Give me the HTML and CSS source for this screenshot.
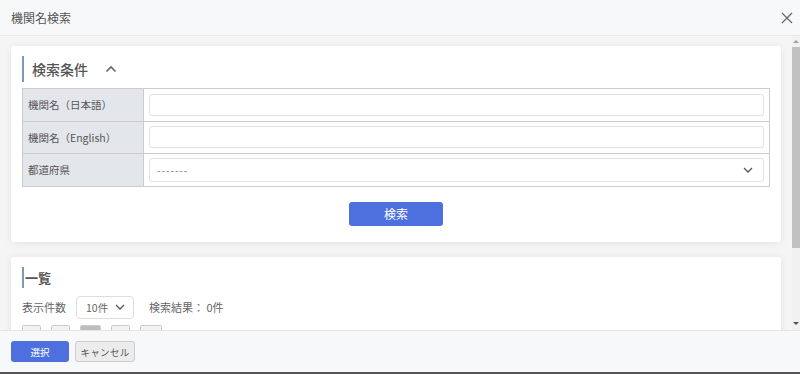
FILE: index.html
```html
<!DOCTYPE html>
<html lang="ja">
<head>
  <meta charset="UTF-8" />
  <meta name="viewport" content="width=device-width, initial-scale=1.0" />
  <title>機関名検索</title>
  <link rel="stylesheet" href="styles.css">
</head>
<body>
  <div class="modal">
    <div class="modal-header">
      <span class="modal-title">機関名検索</span>
      <button class="close" aria-label="close">
        <svg width="12" height="12" viewBox="0 0 12 12"><path d="M1 1L11 11M11 1L1 11" stroke="#666" stroke-width="1.2" fill="none"/></svg>
      </button>
    </div>

    <div class="modal-body">
      <div class="content">
        <div class="card">
          <div class="section-title">
            検索条件
            <svg class="toggle" width="12" height="8" viewBox="0 0 12 8"><path d="M1.5 6.5L6 2L10.5 6.5" stroke="#666" stroke-width="1.6" fill="none"/></svg>
          </div>
          <table class="form-table">
            <tr>
              <th>機関名（日本語）</th>
              <td><input type="text" class="input"></td>
            </tr>
            <tr>
              <th>機関名（English）</th>
              <td><input type="text" class="input"></td>
            </tr>
            <tr>
              <th>都道府県</th>
              <td>
                <div class="input select">
                  <span class="placeholder">-------</span>
                  <svg width="10" height="6" viewBox="0 0 10 6"><path d="M1 1L5 5L9 1" stroke="#555" stroke-width="1.3" fill="none"/></svg>
                </div>
              </td>
            </tr>
          </table>
          <div class="actions">
            <button class="btn-primary btn-search">検索</button>
          </div>
        </div>

        <div class="card">
          <div class="section-title small">一覧</div>
          <div class="list-tools">
            <span>表示件数</span>
            <div class="per-page">
              <span>10件</span>
              <svg width="10" height="6" viewBox="0 0 10 6"><path d="M1 1L5 5L9 1" stroke="#555" stroke-width="1.3" fill="none"/></svg>
            </div>
            <span class="result">検索結果： 0件</span>
          </div>
          <div class="pager">
            <span class="page">«</span>
            <span class="page">‹</span>
            <span class="page active">1</span>
            <span class="page">›</span>
            <span class="page wide">»</span>
          </div>
        </div>
      </div>

      <div class="scrollbar">
        <span class="arrow up"></span>
        <div class="track"><div class="thumb"></div></div>
        <span class="arrow down"></span>
      </div>
    </div>

    <div class="modal-footer">
      <button class="btn-primary btn-select">選択</button>
      <button class="btn-cancel">キャンセル</button>
    </div>
  </div>
</body>
</html>
```

FILE: styles.css
```css
* {
  box-sizing: border-box;
}
html, body {
  margin: 0;
  height: 100%;
}
body {
  font-family: 'Noto Sans CJK JP', 'Noto Sans', sans-serif;
  color: #555;
  background: #555;
  overflow: hidden;
}
.modal {
  height: 372px;
  display: flex;
  flex-direction: column;
  background: #f5f5f5;
}
.modal-header {
  height: 36px;
  flex: none;
  display: flex;
  align-items: center;
  justify-content: space-between;
  padding: 0 7px 0 11px;
  background: #f7f8fa;
  border-bottom: 1px solid #e8e9ec;
}
.modal-title {
  font-size: 12px;
  color: #555;
}
.close {
  border: none;
  background: none;
  padding: 0;
  width: 12px;
  height: 12px;
  display: flex;
}
.modal-body {
  flex: 1;
  display: flex;
  min-height: 0;
}
.content {
  flex: 1;
  overflow: hidden;
  padding: 10px 11px 0 11px;
  display: flex;
  flex-direction: column;
  gap: 15px;
}
.card {
  background: #fff;
  border-radius: 3px;
  box-shadow: 0 1px 8px rgba(0, 0, 0, 0.08);
  padding: 10px 11px 16px 11px;
  flex: none;
}
.section-title {
  display: flex;
  align-items: center;
  height: 26px;
  border-left: 2px solid #7f98b8;
  padding-left: 8px;
  font-size: 14px;
  font-weight: 500;
  color: #555;
  margin-bottom: 6px;
}
.section-title .toggle {
  margin-left: 17px;
}
.section-title.small {
  height: 21px;
  padding-left: 1px;
  font-size: 13px;
  font-weight: bold;
  margin-bottom: 8px;
}
.form-table {
  width: 100%;
  border-collapse: collapse;
  border: 1px solid #ccc;
}
.form-table th {
  width: 121px;
  background: #e3e6ea;
  font-weight: normal;
  font-size: 10.5px;
  text-align: left;
  padding: 0 5px;
  height: 32.5px;
  border: 1px solid #ccc;
  color: #555;
}
.form-table td {
  padding: 0 5px;
  border: 1px solid #ccc;
}
.input {
  display: block;
  width: 100%;
  height: 22px;
  border: 1px solid #e2e2e2;
  border-radius: 3px;
  background: #fff;
  font-family: inherit;
  outline: none;
}
.select {
  display: flex;
  align-items: center;
  justify-content: space-between;
  padding: 0 10px 0 7px;
  height: 24px;
  font-size: 10px;
  color: #777;
  letter-spacing: 1px;
}
.actions {
  display: flex;
  justify-content: center;
  margin-top: 15px;
}
.btn-primary {
  border: none;
  border-radius: 3px;
  background: #4e70df;
  color: #fff;
  font-family: inherit;
  cursor: pointer;
}
.btn-search {
  width: 94px;
  height: 24px;
  font-size: 12px;
}
.list-tools {
  display: flex;
  align-items: center;
  font-size: 11px;
  color: #666;
}
.per-page {
  display: flex;
  align-items: center;
  justify-content: space-between;
  width: 58px;
  height: 23px;
  margin-left: 10px;
  padding: 0 8px 0 9px;
  border: 1px solid #ddd;
  border-radius: 4px;
  font-size: 10.5px;
}
.result {
  margin-left: 15px;
}
.pager {
  display: flex;
  gap: 10px;
  margin-top: 6px;
}
.page {
  width: 19px;
  height: 19px;
  border: 1px solid #ccc;
  border-radius: 2px;
  background: #f2f2f2;
  font-size: 10px;
  display: flex;
  justify-content: center;
  align-items: center;
}
.page.active {
  background: #bdbdbd;
  width: 21px;
}
.page.wide {
  width: 22px;
}
.scrollbar {
  width: 8px;
  flex: none;
  display: flex;
  flex-direction: column;
  align-items: center;
  background: #f1f1f1;
  padding: 4px 0 5px 0;
}
.arrow {
  width: 0;
  height: 0;
  border-left: 3px solid transparent;
  border-right: 3px solid transparent;
}
.arrow.up {
  border-bottom: 3px solid #a3a3a3;
}
.arrow.down {
  border-top: 3px solid #505050;
}
.track {
  flex: 1;
  width: 100%;
  padding-top: 4px;
  padding-bottom: 74px;
}
.thumb {
  height: 100%;
  background: #c1c1c1;
}
.modal-footer {
  height: 42px;
  flex: none;
  display: flex;
  align-items: center;
  gap: 6px;
  padding: 0 11px;
  background: #f7f8fa;
  border-top: 1px solid #e3e5e8;
}
.btn-select {
  width: 58px;
  height: 21px;
  font-size: 9.5px;
}
.btn-cancel {
  width: 60px;
  height: 21px;
  padding: 0;
  white-space: nowrap;
  border: 1px solid #ccc;
  border-radius: 3px;
  background: #ececec;
  color: #555;
  font-family: inherit;
  font-size: 9.5px;
  letter-spacing: 0.3px;
}
```
